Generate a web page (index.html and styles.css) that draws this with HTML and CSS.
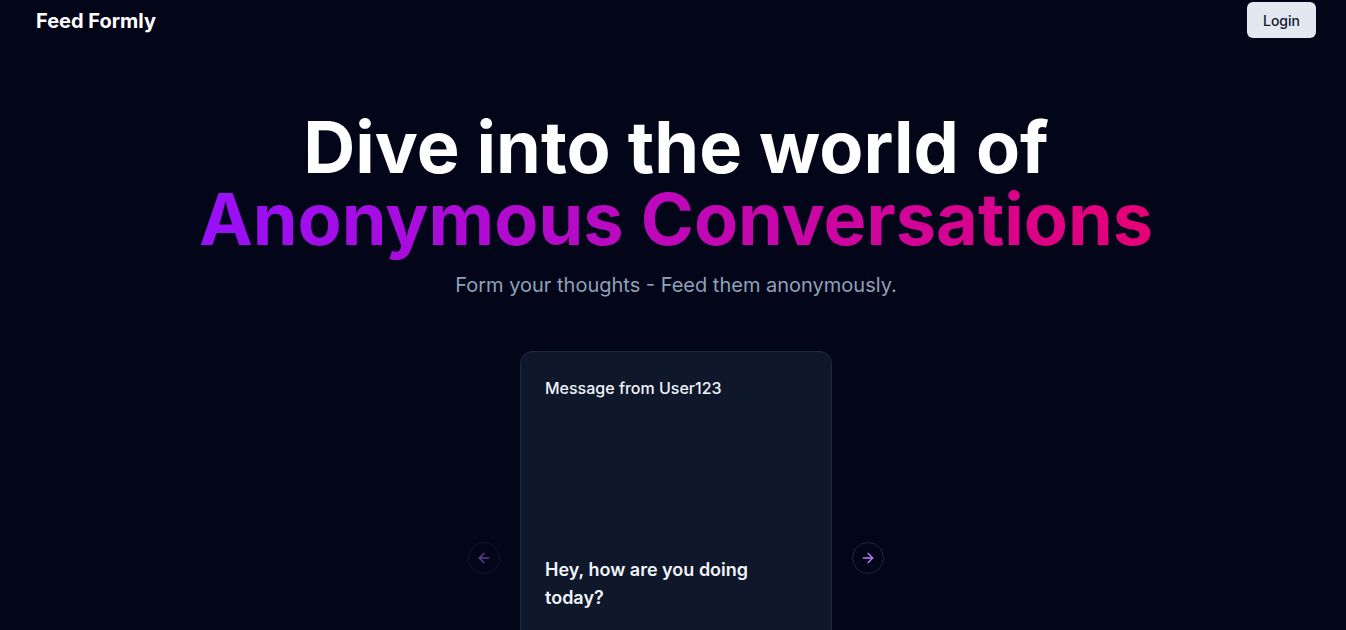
FILE: index.html
```html
<!DOCTYPE html>
<html lang="en">
<head>
<meta charset="utf-8">
<title>Feed Formly</title>
<link rel="stylesheet" href="styles.css">
</head>
<body>
<header class="nav">
  <a class="brand" href="#">Feed Formly</a>
  <button class="login">Login</button>
</header>
<main class="hero">
  <h1 class="title">Dive into the world of<br><span class="grad">Anonymous Conversations</span></h1>
  <p class="subtitle">Form your thoughts - Feed them anonymously.</p>
  <div class="carousel">
    <button class="arrow prev" disabled aria-label="Previous">
      <svg width="16" height="16" viewBox="0 0 24 24" fill="none" stroke="currentColor" stroke-width="2" stroke-linecap="round" stroke-linejoin="round"><path d="m12 19-7-7 7-7"/><path d="M19 12H5"/></svg>
    </button>
    <div class="item">
      <div class="card">
        <div class="card-header">Message from User123</div>
        <div class="card-content"><p class="msg">Hey, how are you doing today?</p></div>
      </div>
    </div>
    <button class="arrow next" aria-label="Next">
      <svg width="16" height="16" viewBox="0 0 24 24" fill="none" stroke="currentColor" stroke-width="2" stroke-linecap="round" stroke-linejoin="round"><path d="M5 12h14"/><path d="m12 5 7 7-7 7"/></svg>
    </button>
  </div>
</main>
</body>
</html>
```
FILE: styles.css
```css
* { box-sizing: border-box; margin: 0; padding: 0; }
html, body { background: #020618; }
body {
  font-family: Inter, "Noto Sans", sans-serif;
  color: #fff;
  min-height: 100vh;
  overflow: hidden;
}
.nav {
  display: flex;
  justify-content: space-between;
  align-items: center;
  height: 42px;
  padding: 0 30px 0 36px;
}
.brand {
  color: #fff;
  text-decoration: none;
  font-weight: 700;
  font-size: 20px;
  line-height: 28px;
}
.login {
  font-family: inherit;
  font-size: 14px;
  font-weight: 500;
  color: #0f172b;
  background: #e2e8f0;
  border: none;
  border-radius: 6px;
  height: 36px;
  width: 69px;
  margin-top: -2px;
  cursor: pointer;
}
.hero {
  display: flex;
  flex-direction: column;
  align-items: center;
  text-align: center;
  padding-top: 69px;
  padding-left: 6px;
}
.title {
  font-size: 72px;
  line-height: 72px;
  font-weight: 700;
}
.grad {
  background: linear-gradient(to right, #9810fa, #e60076);
  -webkit-background-clip: text;
  background-clip: text;
  color: transparent;
}
.subtitle {
  margin-top: 16px;
  font-size: 20px;
  line-height: 28px;
  color: #90a1b9;
}
.carousel {
  position: relative;
  width: 320px;
  margin-top: 48px;
}
.item { padding: 4px; }
.card {
  background: #0f172b;
  border: 1px solid #1d293d;
  border-radius: 12px;
  height: 414px;
  display: flex;
  flex-direction: column;
  text-align: left;
}
.card-header {
  padding: 24px 24px 23px;
  font-size: 16px;
  line-height: 24px;
  font-weight: 500;
  color: #f1f5f9;
}
.card-content {
  height: 322px;
  display: flex;
  align-items: center;
  padding: 0 24px;
}
.msg {
  font-size: 18px;
  line-height: 28px;
  font-weight: 600;
  color: #f1f5f9;
  width: 220px;
}
.arrow {
  position: absolute;
  top: 50%;
  transform: translateY(-50%);
  width: 32px;
  height: 32px;
  border-radius: 50%;
  border: 1px solid #1d293d;
  background: #020618;
  color: #c27aff;
  display: flex;
  align-items: center;
  justify-content: center;
  cursor: pointer;
}
.prev { left: -48px; opacity: 0.5; }
.next { right: -48px; }
```
